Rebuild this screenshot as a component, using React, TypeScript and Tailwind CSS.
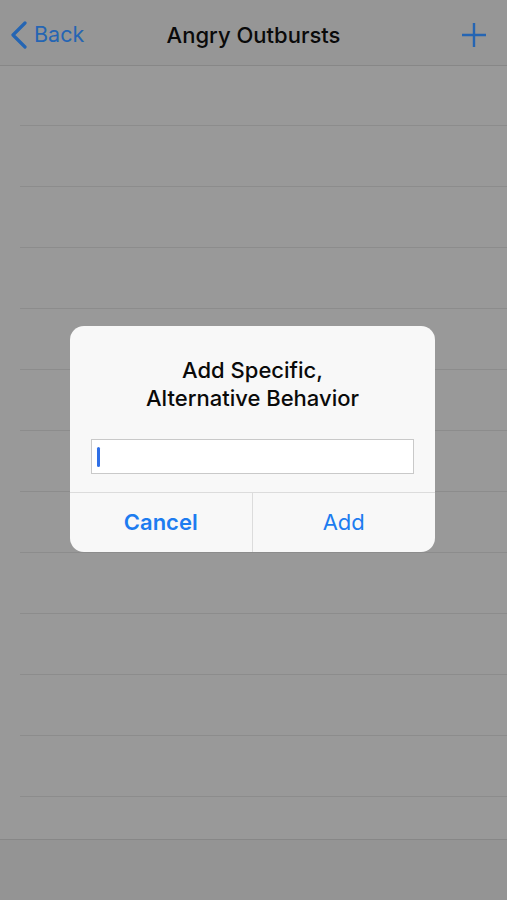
import { useState } from 'react'

const rows = Array.from({ length: 12 }, (_, i) => i)

function App() {
  const [texto, setTexto] = useState('')

  return (
    <div className="relative w-[507px] h-[900px] overflow-hidden bg-[#999999] flex flex-col" style={{ fontFamily: 'Inter, "Noto Sans", sans-serif' }}>
      {/* Nav bar */}
      <div className="h-[66px] shrink-0 bg-[#969696] border-b border-[#878787] flex items-center justify-between px-[10px] pt-[4px]">
        <div className="flex items-center gap-[6px] text-[#2565b3] w-[120px]">
          <svg width="18" height="28" viewBox="0 0 18 28" fill="none">
            <path d="M15 2 L3 14 L15 26" stroke="#2565b3" strokeWidth="3.2" strokeLinecap="round" strokeLinejoin="round" />
          </svg>
          <span className="text-[21.5px] leading-none">Back</span>
        </div>
        <span className="text-[22px] font-medium text-[#0a0a0a] leading-none">Angry Outbursts</span>
        <div className="w-[120px] flex justify-end pr-[10px]">
          <svg width="26" height="26" viewBox="0 0 26 26" fill="none">
            <path d="M13 1 V25 M1 13 H25" stroke="#2565b3" strokeWidth="2.4" />
          </svg>
        </div>
      </div>

      {/* List */}
      <div className="flex-1 flex flex-col">
        {rows.map((r) => (
          <div key={r} className={`${r === 0 ? 'h-[60px]' : 'h-[61px]'} shrink-0 ml-[20px] border-b border-[#8c8c8c]`} />
        ))}
      </div>

      {/* Toolbar */}
      <div className="h-[61px] shrink-0 bg-[#949494] border-t border-[#878787]" />

      {/* Alert */}
      <div className="absolute top-[326px] left-[70px] w-[365px] bg-[#f8f8f8] rounded-[14px] overflow-hidden">
        <div className="pt-[30px] px-[16px] text-center text-[22px] leading-[28px] font-medium text-[#0a0a0a]">
          Add Specific,
          <br />
          Alternative Behavior
        </div>
        <div className="px-[21px] pt-[27px] pb-[18px]">
          <div className="relative h-[35px] bg-white border border-[#c9c9c9] flex items-center px-[5px]">
            <div className="w-[3px] h-[20px] bg-[#2f6fe6] rounded-full" />
            <input
              value={texto}
              onChange={(e) => setTexto(e.target.value)}
              className="absolute inset-0 bg-transparent outline-none px-[10px] text-[16px]"
            />
          </div>
        </div>
        <div className="grid grid-cols-2 border-t border-[#dcdcdc] h-[60px]">
          <button className="flex items-center justify-center text-[22px] font-semibold text-[#1d7cf0] border-r border-[#dcdcdc]">
            Cancel
          </button>
          <button className="flex items-center justify-center text-[22px] text-[#1d7cf0]">
            Add
          </button>
        </div>
      </div>
    </div>
  )
}

export default App
